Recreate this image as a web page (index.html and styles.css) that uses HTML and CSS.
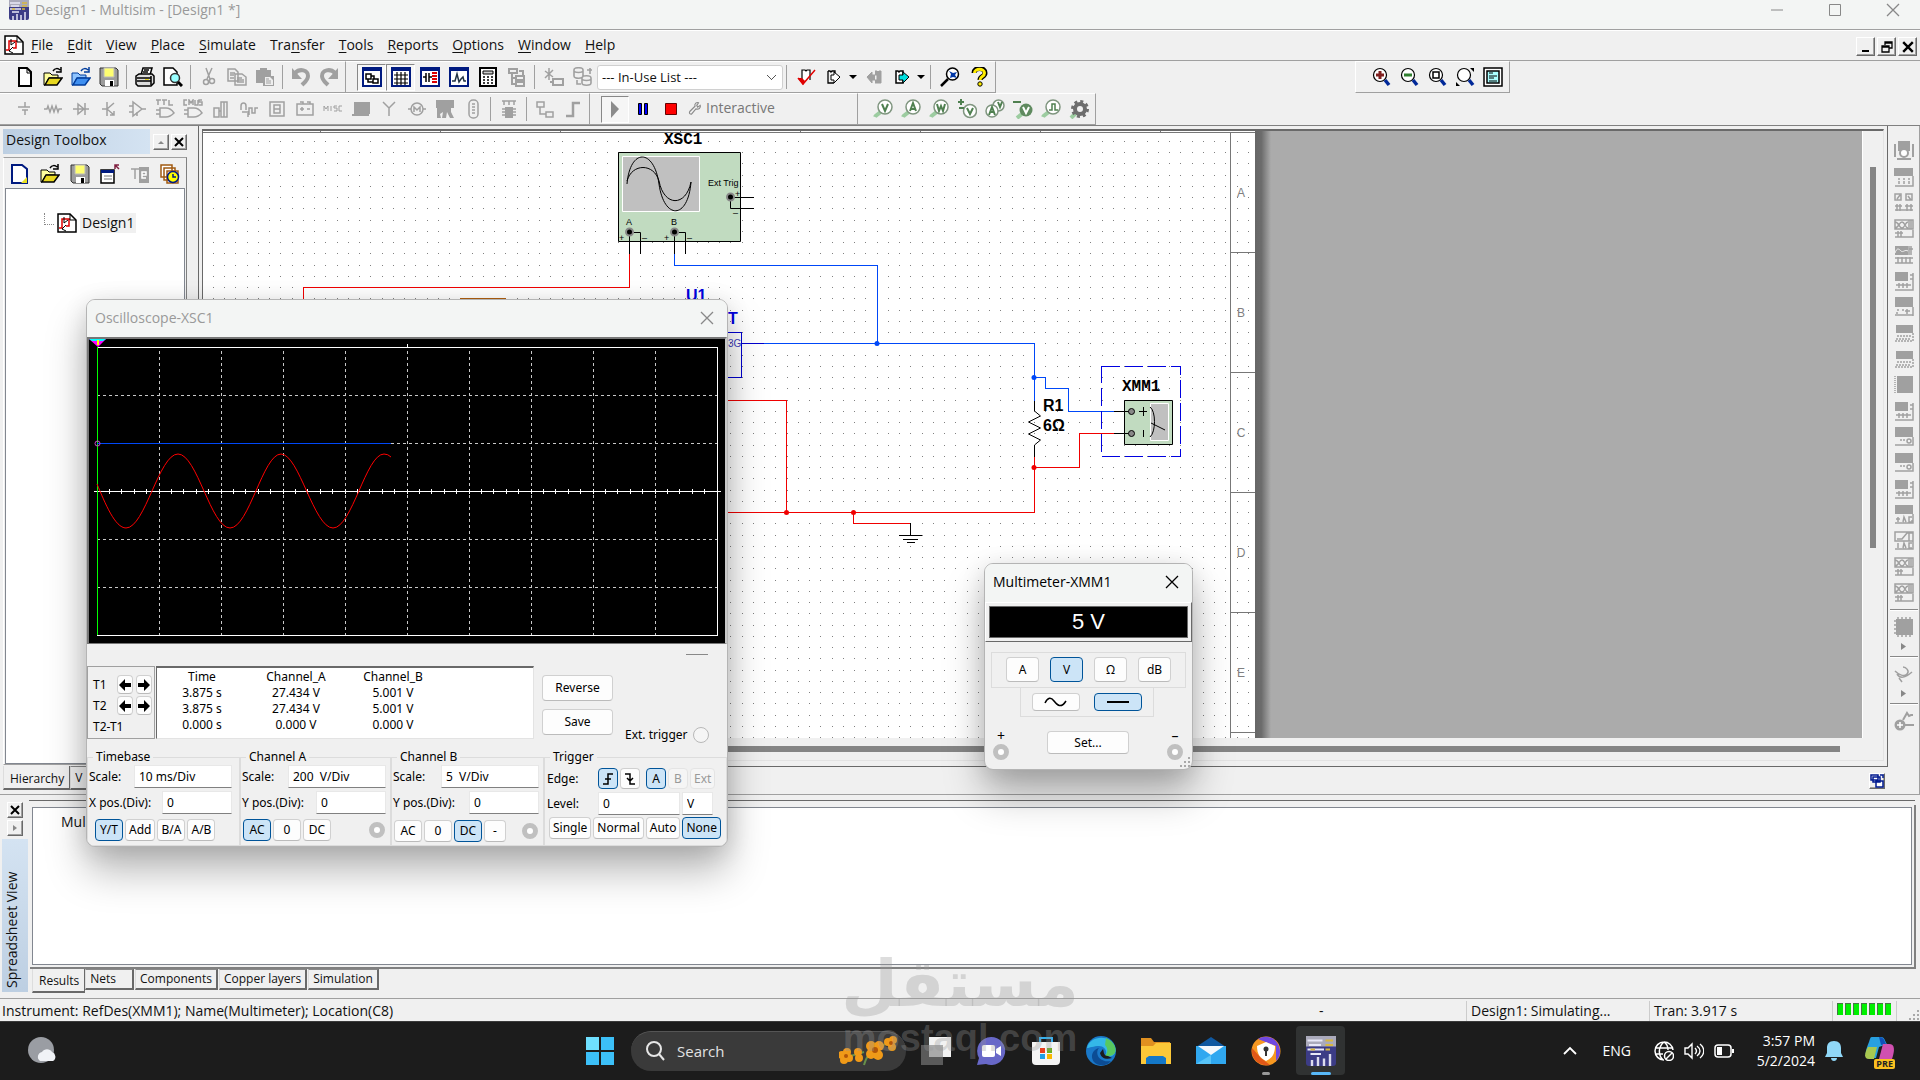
FILE: index.html
```html
<!DOCTYPE html>
<html lang="en">
<head>
<meta charset="utf-8">
<title>Design1 - Multisim</title>
<link rel="stylesheet" href="styles.css">
</head>
<body>
<svg class="defs" aria-hidden="true">
  <symbol id="doc" viewBox="0 0 20 20"><path d="M4 1h8l4 4v14H4z" fill="#fff" stroke="#000" stroke-width="2"/><path d="M12 1v5h4" fill="none" stroke="#000"/></symbol>
  <symbol id="open" viewBox="0 0 20 20"><path d="M1 6h6l2 2h6v3H6l-4 7H1z" fill="#ffff9c" stroke="#000"/><path d="M6 11h13l-5 7H2z" fill="#e8d820" stroke="#000" stroke-width="1.5"/><path d="M10 4c2-3 5-3 7-1m1-3v5h-5" fill="none" stroke="#000" stroke-width="1.5"/></symbol>
  <symbol id="openb" viewBox="0 0 20 20"><path d="M1 6h6l2 2h6v3H6l-4 7H1z" fill="#8fc4ff" stroke="#003c9c"/><path d="M6 11h13l-5 7H2z" fill="#3f8ff0" stroke="#003c9c" stroke-width="1.5"/><path d="M10 4c2-3 5-3 7-1m1-3v5h-5" fill="none" stroke="#003c9c" stroke-width="1.5"/></symbol>
  <symbol id="save" viewBox="0 0 20 20"><path d="M1 1h16l2 2v16H3l-2-2z" fill="#9c9c9c" stroke="#333"/><path d="M5 1h10v9H5z" fill="#ffff70" stroke="#bbb"/><path d="M6 13h9v6H6z" fill="#fff"/><path d="M11 14h3v5h-3z" fill="#000"/></symbol>
  <symbol id="print" viewBox="0 0 20 20"><path d="M6 8l2-7h9l-2 7" fill="#fff" stroke="#000" stroke-width="1.5"/><path d="M1 9l3-2h13l2 2v7l-3 3H3l-2-2z" fill="#ddd" stroke="#000" stroke-width="1.5"/><path d="M2 11h14M2 14h14M16 9v9M9 3h5M8 5h5" stroke="#000" stroke-width="1.5"/><path d="M10 12.500h4" stroke="#e8d820"/></symbol>
  <symbol id="preview" viewBox="0 0 20 20"><path d="M1 1h9l4 4v13H1z" fill="#fff" stroke="#000" stroke-width="1.500"/><circle cx="12" cy="11" r="4.500" fill="#9ff" stroke="#333" stroke-width="1.500"/><path d="M15 15l4 4" stroke="#000" stroke-width="3"/></symbol>
  <symbol id="cut" viewBox="0 0 20 20"><path d="M7 1l4 11M13 1L8 12" stroke="#a0a0a0" stroke-width="1.500"/><circle cx="7" cy="15" r="2.500" fill="none" stroke="#a0a0a0" stroke-width="1.500"/><circle cx="13" cy="14" r="2.500" fill="none" stroke="#a0a0a0" stroke-width="1.500"/></symbol>
  <symbol id="copy" viewBox="0 0 20 20"><path d="M1 2h7l3 3v9H1zM8 7h7l4 3v8H8zM3 6h5M3 8h4M3 11h4M10 11h5M10 13h7M10 15h7" fill="#eee" stroke="#a0a0a0" stroke-width="1.500"/></symbol>
  <symbol id="paste" viewBox="0 0 20 20"><path d="M1 3h4V1h7v2h4v6h3v10H8v-3H1z" fill="#a0a0a0"/><path d="M10 10h5l3 3v5h-8z" fill="#eee"/><path d="M11 12h3M11 14h5M11 16h5" stroke="#a0a0a0"/></symbol>
  <symbol id="undo" viewBox="0 0 20 20"><path d="M4 6c5-5 13-3 13 3 0 4-3 6-6 9" fill="none" stroke="#a0a0a0" stroke-width="4"/><path d="M1 1v11h10z" fill="#a0a0a0"/></symbol>
  <symbol id="redo" viewBox="0 0 20 20"><path d="M16 6C11 1 3 3 3 9c0 4 3 6 6 9" fill="none" stroke="#a0a0a0" stroke-width="4"/><path d="M19 1v11H9z" fill="#a0a0a0"/></symbol>
  <symbol id="frame" viewBox="0 0 20 20"><path d="M1 1h18v18H1z" fill="#fff" stroke="#001a80" stroke-width="2"/><path d="M1 1h18v3H1z" fill="#001a80"/></symbol>
  <symbol id="wtree" viewBox="0 0 20 20"><use href="#frame"/><path d="M4 7h5v5H4zM11 12h5v4h-5zM6 12v3h5M9 9h3v3" fill="none" stroke="#000" stroke-width="1.500"/></symbol>
  <symbol id="wgrid" viewBox="0 0 20 20"><use href="#frame"/><path d="M3 8h14M3 12h14M3 16h14M6 5v13M10 5v13M14 5v13" stroke="#000" stroke-width="1.200"/></symbol>
  <symbol id="wcomp" viewBox="0 0 20 20"><use href="#frame"/><path d="M3 10h3M6 6v9M9 6v9M9 10h3" stroke="#000" stroke-width="1.500"/><path d="M12 6h5M12 9h5M12 12h5M12 15h5" stroke="#d00" stroke-width="2"/></symbol>
  <symbol id="wgraph" viewBox="0 0 20 20"><use href="#frame"/><path d="M3 14h3l2-7 2 8 2-3 2-2 1 4h2" fill="none" stroke="#234" stroke-width="1.500"/></symbol>
  <symbol id="calc" viewBox="0 0 20 20"><path d="M2 1h16v18H2z" fill="#fff" stroke="#000" stroke-width="2"/><path d="M5 4h10v3H5z" fill="#ccc" stroke="#000"/><path d="M5 10h2m2 0h2m2 0h2M5 13h2m2 0h2m2 0h2M5 16h2m2 0h2m2 0h2" stroke="#000" stroke-width="1.500"/></symbol>
  <symbol id="tree" viewBox="0 0 20 20"><path d="M2 2h8v4H2zM9 9h8v4H9zM9 15h8v4H9zM5 6v11h4M5 11h4M12 4h4v5" fill="none" stroke="#a0a0a0" stroke-width="2"/></symbol>
  <symbol id="newc" viewBox="0 0 20 20"><path d="M5 1v12M1 4l8 6M9 3L1 11" stroke="#a0a0a0" stroke-width="1.500"/><path d="M9 12h10v6H9zM6 15h3" fill="none" stroke="#a0a0a0" stroke-width="2"/></symbol>
  <symbol id="db" viewBox="0 0 20 20"><path d="M1 3c0-3 9-3 9 0v6c0 3-9 3-9 0zM9 11c0-3 9-3 9 0v5c0 3-9 3-9 0zM1 4c1 2 8 2 9 0M9 12c1 2 8 2 9 0M17 1v6M14 3h5M4 13v4h4" fill="none" stroke="#a0a0a0" stroke-width="1.600"/></symbol>
  <symbol id="erc" viewBox="0 0 20 20"><path d="M6 13V3h3l1 1 1-1h3v10" fill="#fff" stroke="#000" stroke-width="1.200"/><path d="M2 11l5 6L19 3" fill="none" stroke="#e00000" stroke-width="1.500"/><path d="M2 11h4l3 3-2 4z" fill="#e00000"/></symbol>
  <symbol id="xfer" viewBox="0 0 20 20"><path d="M3 4h2l1 1 1-1h3v3M3 4v12h6" fill="none" stroke="#000" stroke-width="1.300"/><path d="M6 8h3V5l6 5-6 6v-3H6z" fill="#fff" stroke="#000"/></symbol>
  <symbol id="xferg" viewBox="0 0 20 20"><path d="M11 4h2l1 1 1-1h2v12h-6M10 8H8V5l-5 5 5 6v-3h5V8z" fill="#a0a0a0" stroke="#a0a0a0"/></symbol>
  <symbol id="xferc" viewBox="0 0 20 20"><path d="M3 4h2l1 1 1-1h3v12H3z" fill="#fff" stroke="#000" stroke-width="1.500"/><path d="M6 8h4V5l6 5-6 6v-3H6z" fill="#00e0e0" stroke="#000"/></symbol>
  <symbol id="find" viewBox="0 0 20 20"><circle cx="12.500" cy="7" r="6" fill="#fff" stroke="#000" stroke-width="1.500"/><path d="M8 12l-7 7" stroke="#000" stroke-width="2.500"/><path d="M9 4l4 2 4-1-2 3 2 3-4-1-3 1 1-4z" fill="#0038a8"/></symbol>
  <symbol id="help" viewBox="0 0 20 20"><path d="M5 6c0-6 11-6 11 0 0 4-5 3-5 7" fill="none" stroke="#000" stroke-width="5"/><path d="M5.500 6c0-5 10-5 10 0 0 4-4.500 3-4.500 7" fill="none" stroke="#ffec00" stroke-width="3"/><circle cx="11" cy="17" r="2.200" fill="#ffec00" stroke="#000"/></symbol>
  <symbol id="mag" viewBox="0 0 20 20"><circle cx="9" cy="8" r="6.500" fill="#fff" stroke="#000" stroke-width="1.200"/><path d="M14 13l4 5" stroke="#002898" stroke-width="3.500"/></symbol>
  <symbol id="zin" viewBox="0 0 20 20"><use href="#mag"/><path d="M5 8h8M9 4v8" stroke="#802020" stroke-width="3"/></symbol>
  <symbol id="zout" viewBox="0 0 20 20"><use href="#mag"/><path d="M5 8h8" stroke="#308030" stroke-width="3"/></symbol>
  <symbol id="zarea" viewBox="0 0 20 20"><use href="#mag"/><path d="M6 5h6v6H6z" fill="none" stroke="#000" stroke-width="1.500"/></symbol>
  <symbol id="zfit" viewBox="0 0 20 20"><use href="#mag"/><path d="M15 1h4v4zM1 15v4h4z" fill="#000"/></symbol>
  <symbol id="zfull" viewBox="0 0 20 20"><path d="M1 1h18v18H1z" fill="#fff" stroke="#000" stroke-width="1.500"/><path d="M4 4h12v12H4z" fill="#aff" stroke="#000" stroke-width="1.500"/><path d="M6 6h4M6 9h8M6 11h5M6 14h8" stroke="#000"/></symbol>
  <symbol id="c1" viewBox="0 0 20 20"><path d="M5 8h10M7 11h6M10 3v5M10 11v5M3 8h4" class="g"/></symbol>
  <symbol id="c2" viewBox="0 0 20 20"><path d="M1 10h3l1-3 2 6 2-6 2 6 2-6 2 6 1-3h3" class="g"/></symbol>
  <symbol id="c3" viewBox="0 0 20 20"><path d="M2 10h16M7 5v10l6-5zM14 4v12" class="g"/></symbol>
  <symbol id="c4" viewBox="0 0 20 20"><path d="M8 3v14M3 10h5l7-6M8 10l7 6m0-4v4h-4" class="g"/></symbol>
  <symbol id="c5" viewBox="0 0 20 20"><path d="M2 7h4M2 13h4M6 3v14l9-7zM15 10h4M10 13v4" class="g"/></symbol>
  <symbol id="c6" viewBox="0 0 20 20"><path d="M1 1h5M3 1v5M7 1h5M9 1v5M14 1v5h4M5 9h6c4 0 6 2 8 5-2 2-4 4-8 4H5zM1 11h4M1 15h4" class="g"/></symbol>
  <symbol id="c7" viewBox="0 0 20 20"><path d="M4 1H1v5h3M6 6V1l2 3 2-3v5M12 1v5h3V1M19 1h-3v2h3v3h-3M5 9h6c4 0 6 2 8 5-2 2-4 4-8 4H5zM1 11h4M1 15h4" class="g"/></symbol>
  <symbol id="c8" viewBox="0 0 20 20"><path d="M3 9h5v9H3zM10 3h6v15h-6zM13 3v15M8 12h2" class="g"/></symbol>
  <symbol id="c9" viewBox="0 0 20 20"><path d="M2 11V7c0-4 5-4 5 0v4M10 16V9h3v5h3V9h3M9 12v6M3 13h5" class="g"/></symbol>
  <symbol id="c10" viewBox="0 0 20 20"><path d="M3 3h14v14H3zM7 6h6v8H7zM7 10h6" class="g"/></symbol>
  <symbol id="c11" viewBox="0 0 20 20"><path d="M2 5h16v11H2zM5 3h3v2M12 3h3v2M5 10h4M12 10h3M7 8v4" class="g"/></symbol>
  <symbol id="c12" viewBox="0 0 20 20"><path d="M1 12V7l2 3 2-3v5M8 7v5M14 7h-3v2h3v3h-3M19 7h-3v5h3" fill="none" stroke="#a0a0a0"/></symbol>
  <symbol id="c13" viewBox="0 0 20 20"><path d="M4 4h14v10H4zM1 16h17" fill="#a0a0a0" stroke="#a0a0a0" stroke-width="2"/></symbol>
  <symbol id="c14" viewBox="0 0 20 20"><path d="M4 3l6 6 6-6M10 9v8" class="g"/></symbol>
  <symbol id="c15" viewBox="0 0 20 20"><circle cx="10" cy="10" r="6" class="g"/><path d="M1 10h3M16 10h3M7 13V8l3 3 3-3v5" class="g"/></symbol>
  <symbol id="c16" viewBox="0 0 20 20"><path d="M1 1h18v8h-3v4l3 6h-4l-3-6-1 6H7l1-6-3 2 1 4H2V9H1z" fill="#a0a0a0"/></symbol>
  <symbol id="c17" viewBox="0 0 20 20"><rect x="6" y="1" width="9" height="18" rx="4" class="g"/><path d="M9 5h3M9 8h3M9 11h3M9 14h3" class="g"/></symbol>
  <symbol id="c18" viewBox="0 0 20 20"><path d="M3 2h14M5 2v4M10 2v4M15 2v4" class="g"/><path d="M6 8h8v11H6z" fill="#a0a0a0"/><path d="M3 10h3M3 13h3M3 16h3M14 10h3M14 13h3M14 16h3" class="g"/></symbol>
  <symbol id="c19" viewBox="0 0 20 20"><path d="M2 3h7v5H2zM11 13h7v5h-7zM5 8v7h6" class="g"/></symbol>
  <symbol id="c20" viewBox="0 0 20 20"><path d="M3 17h7V4h7" fill="none" stroke="#a0a0a0" stroke-width="2.500"/></symbol>
  <symbol id="probe" viewBox="0 0 20 20"><path d="M2 18c1-3 4-2 6-6" stroke="#9ccca0" stroke-width="4" fill="none"/><circle cx="12" cy="8" r="7" fill="#fff" stroke="#7f957f" stroke-width="1.500"/></symbol>
  <symbol id="pv" viewBox="0 0 20 20"><use href="#probe"/><path d="M9 5l3 7 3-7" class="p"/></symbol>
  <symbol id="pa" viewBox="0 0 20 20"><use href="#probe"/><path d="M9 12l3-8 3 8M10 10h4" class="p"/></symbol>
  <symbol id="pw" viewBox="0 0 20 20"><use href="#probe"/><path d="M8 5l2 7 2-5 2 5 2-7" class="p"/></symbol>
  <symbol id="pvv" viewBox="0 0 20 20"><circle cx="13" cy="12" r="6.500" fill="#fff" stroke="#7f957f" stroke-width="1.500"/><path d="M10 9l3 6 3-6M1 3h6M4 0v6M2 9h5" class="p"/></symbol>
  <symbol id="pav" viewBox="0 0 20 20"><circle cx="13.500" cy="6.500" r="5.500" fill="#fff" stroke="#7f957f" stroke-width="1.500"/><circle cx="7" cy="12" r="6" fill="#fff" stroke="#7f957f" stroke-width="1.500"/><path d="M4 16l3-8 3 8M5 13h4M13 3l2 5 2-5" class="p"/></symbol>
  <symbol id="pr" viewBox="0 0 20 20"><path d="M4 19l6-5" stroke="#9ccca0" stroke-width="4"/><circle cx="13" cy="11" r="6.500" fill="#5f8a5f"/><path d="M10 8l3 6 3-6" fill="none" stroke="#fff" stroke-width="2"/><path d="M0 3h8" class="p"/></symbol>
  <symbol id="pd" viewBox="0 0 20 20"><use href="#probe"/><path d="M8 11h3V5h3v6h3" fill="none" stroke="#4f8050" stroke-width="1.500"/></symbol>
  <symbol id="gear" viewBox="0 0 20 20"><path d="M2 19l5-5" stroke="#9ccca0" stroke-width="4"/><circle cx="11" cy="10" r="5" fill="none" stroke="#6d6d6d" stroke-width="4"/><circle cx="11" cy="10" r="7.500" fill="none" stroke="#6d6d6d" stroke-width="3" stroke-dasharray="3 2.890"/></symbol>
  <symbol id="wrench" viewBox="0 0 16 16"><path d="M2 12l6-6c-1-3 2-5 4-4L10 5l1 2 3-2c1 3-2 5-5 4l-5 6c-2 0-3-1-2-3z" fill="none" stroke="#8a8a8a" stroke-width="1.300"/></symbol>
  <symbol id="schem" viewBox="0 0 20 20"><path d="M1 1h12l6 6v12H1z" fill="#fff" stroke="#000" stroke-width="1.500"/><path d="M2 15h3V6h8M12 6v7H9" fill="none" stroke="#e00000" stroke-width="1.500"/><path d="M13 1v6h6M7 4v6l4-3M9 12l-4 4 4 2" fill="none" stroke="#000"/></symbol>
  <symbol id="newb" viewBox="0 0 20 20"><path d="M2 1h10l5 4v14H2z" fill="#fff" stroke="#001a80" stroke-width="2"/><path d="M11 19l6-6v6z" fill="#e8e020"/></symbol>
  <symbol id="closew" viewBox="0 0 20 20"><path d="M1 6h13v13H1z" fill="#fff" stroke="#000" stroke-width="1.500"/><path d="M1 6h13v3H1z" fill="#001a80"/><path d="M4 12h8M4 15h8" stroke="#777"/><path d="M15 5V1h4M15 1l4 4" fill="none" stroke="#802040" stroke-width="1.500"/></symbol>
  <symbol id="te" viewBox="0 0 20 20"><path d="M1 5h8M5 5v10" class="g"/><path d="M9 3h10v16H9z" fill="#a0a0a0"/><path d="M16 14h-4V8h4v3h-4" fill="none" stroke="#fff" stroke-width="1.500"/></symbol>
  <symbol id="hist" viewBox="0 0 20 20"><path d="M1 1h11v12H1zM4 4h11v12H4zM7 7h11v12H7z" fill="#fff" stroke="#a05a10" stroke-width="1.500"/><circle cx="13" cy="13" r="5.500" fill="#ff0" stroke="#001a80" stroke-width="1.500"/><path d="M13 10v3h3" fill="none" stroke="#001a80" stroke-width="1.500"/></symbol>
  <symbol id="app" viewBox="0 0 20 20"><rect width="20" height="20" rx="2" fill="#3c3c86"/><path d="M0 0h20v7H0z" fill="#aab"/><path d="M1 3h10M2 6h8M1 9h11M3 12h7" stroke="#e8e8f8" stroke-width="1.300"/><path d="M13 3h5M13 6h5M3 9h3M13 9h3" stroke="#d8b840" stroke-width="1.300"/><path d="M4 20v-4M8 20v-6M12 20v-5M16 20v-8" stroke="#dde" stroke-width="1.600"/></symbol>
  <symbol id="n1" viewBox="0 0 20 20"><path d="M5 1h10v8H5zM1 3v13M19 3v13M3 18h14" stroke="#a0a0a0" stroke-width="2" fill="#a0a0a0"/><circle cx="10" cy="12" r="4" fill="#fff" stroke="#a0a0a0" stroke-width="2"/></symbol>
  <symbol id="n2" viewBox="0 0 20 20"><path d="M0 1h19v8H0z" fill="#a0a0a0"/><path d="M19 9v10H1M4 12h2m3 0h2m3 0h2M5 14v3M10 14v3M15 14v3" class="g"/></symbol>
  <symbol id="n3" viewBox="0 0 20 20"><path d="M1 1h6v6H1zM12 1h6v6h-6zM3 6l3-4M14 3l3 4M1 13h7M3 11v7M6 11v7M11 13h8M13 11v7M17 11v7M1 17h18" class="g"/></symbol>
  <symbol id="n4" viewBox="0 0 20 20"><path d="M1 1h18v9H1zM1 3c4 0 4 6 7 6s3-6 6-6M1 9c4 0 4-6 7-6s3 6 6 6M15 1v9M17 1v9M1 14h8M4 12v6M7 12v6M1 18h18v-7" class="g"/></symbol>
  <symbol id="n5" viewBox="0 0 20 20"><path d="M1 1h13v9H1z" fill="#a0a0a0"/><path d="M1 8c2-6 4-4 6-2s4-2 7 0" stroke="#eee" fill="none"/><path d="M15 1v9M17 1v9M15 4h4M1 13h18M1 18h18M4 12v6M8 12v6M12 12v6M16 12v6" class="g"/></symbol>
  <symbol id="n6" viewBox="0 0 20 20"><path d="M1 1h13v9H1z" fill="#a0a0a0"/><path d="M19 2v17H1M16 4h3M16 8h3M2 14h15M5 12v5M9 12v5M13 12v5" class="g"/></symbol>
  <symbol id="n7" viewBox="0 0 20 20"><path d="M1 0h18v10H1z" fill="#a0a0a0"/><path d="M1 18h18M19 10v9M3 13h2m3 0h2M2 16h2M13 12v5M11 14h5" class="g"/></symbol>
  <symbol id="n8" viewBox="0 0 20 20"><path d="M2 2h17v8H2z" fill="#a0a0a0"/><path d="M1 18h18v-9M3 13h15M3 15v3M6 15v3M9 15v3M12 15v3M15 15v3" class="g" stroke-dasharray="2 1"/></symbol>
  <symbol id="n9" viewBox="0 0 20 20"><path d="M3 1h16v17H3z" fill="#a0a0a0"/><path d="M1 1v17" class="g" stroke-dasharray="1 1"/></symbol>
  <symbol id="n10" viewBox="0 0 20 20"><path d="M1 0h18v9H1z" fill="#a0a0a0"/><path d="M1 18h18V9M4 17v-5M2 14h4M9 17l1-5 2 5M18 12h-3v5h3v-2" class="g"/></symbol>
  <symbol id="n11" viewBox="0 0 20 20"><path d="M1 1h18v9H1zM3 8h5l5-6h6M15 1v9M1 18h18v-8M4 12v5M9 17l1-5 2 5M18 12h-3v5h3" class="g"/></symbol>
  <symbol id="n12" viewBox="0 0 20 20"><path d="M1 0h18v10H1z" fill="#a0a0a0"/><path d="M1 18h18v-8M6 13h2M9 13h2" class="g"/><circle cx="15" cy="14" r="2" class="g"/></symbol>
  <symbol id="chip" viewBox="0 0 20 20"><path d="M2 2h17v16H2z" fill="#a0a0a0"/><path d="M3 1h15M3 19h15M1 3v14" class="g" stroke-dasharray="2 2"/></symbol>
  <symbol id="clamp" viewBox="0 0 20 20"><path d="M1 7c4 4 9 6 12 3s-1-7-4-7M3 10c3 5 8 4 15-2M5 14l3 4" class="g"/></symbol>
  <symbol id="cprobe" viewBox="0 0 20 20"><circle cx="6" cy="14" r="5.500" fill="#a0a0a0"/><path d="M3 14h6M6 11v6" stroke="#fff" stroke-width="1.500"/><path d="M9 9l4-7 2 3 2-1h2M11 14h9" fill="none" stroke="#a0a0a0" stroke-width="2"/></symbol>
  <symbol id="x" viewBox="0 0 14 14"><path d="M1 1l12 12M13 1L1 13" fill="none" stroke="currentColor" stroke-width="1.300"/></symbol>
  <symbol id="xb" viewBox="0 0 10 10"><path d="M1 1l8 8M9 1L1 9" stroke="#000" stroke-width="2"/></symbol>
  <symbol id="al" viewBox="0 0 12 12"><path d="M0 6l6-6v4h6v4H6v4z" fill="#000"/></symbol>
  <symbol id="ar" viewBox="0 0 12 12"><path d="M12 6L6 0v4H0v4h6v4z" fill="#000"/></symbol>
  <symbol id="grip" viewBox="0 0 12 12"><path d="M9 1h2v2H9zM5 5h2v2H5zM9 5h2v2H9zM1 9h2v2H1zM5 9h2v2H5zM9 9h2v2H9z" fill="#a8a8a8"/></symbol>
</svg>

<header class="titlebar">
  <svg class="i20"><use href="#app"/></svg>
  <span class="title">Design1 - Multisim - [Design1 *]</span>
  <button class="cap" aria-label="Minimize"><svg class="i14" viewBox="0 0 14 14"><path d="M1 7h12" stroke="#888"/></svg></button>
  <button class="cap" aria-label="Maximize"><svg class="i14" viewBox="0 0 14 14"><path d="M1.500 1.500h11v11h-11z" fill="none" stroke="#888"/></svg></button>
  <button class="cap" aria-label="Close"><svg class="i14"><use href="#x"/></svg></button>
</header>

<nav class="menubar">
  <svg class="i20"><use href="#schem"/></svg>
  <div class="menus">
    <a href="#"><u>F</u>ile</a><a href="#"><u>E</u>dit</a><a href="#"><u>V</u>iew</a><a href="#"><u>P</u>lace</a><a href="#"><u>S</u>imulate</a><a href="#">Tra<u>n</u>sfer</a><a href="#"><u>T</u>ools</a><a href="#"><u>R</u>eports</a><a href="#"><u>O</u>ptions</a><a href="#"><u>W</u>indow</a><a href="#"><u>H</u>elp</a>
  </div>
  <div class="mdi">
    <button class="bevel" aria-label="Minimize design"><svg class="i12" viewBox="0 0 12 12"><path d="M2 9h7v2H2z"/></svg></button>
    <button class="bevel" aria-label="Restore design"><svg class="i12" viewBox="0 0 12 12"><path d="M4 4V1h7v6H8M1 5h7v6H1zM4 2h7M1 6h7" fill="none" stroke="#000" stroke-width="1.300"/></svg></button>
    <button class="bevel" aria-label="Close design"><svg class="i12"><use href="#xb"/></svg></button>
  </div>
</nav>

<div class="toolrow">
  <div class="bar">
    <button class="tb" aria-label="New"><svg class="i20"><use href="#doc"/></svg></button><button class="tb" aria-label="Open"><svg class="i20"><use href="#open"/></svg></button><button class="tb" aria-label="Open sample"><svg class="i20"><use href="#openb"/></svg></button><button class="tb" aria-label="Save"><svg class="i20"><use href="#save"/></svg></button><i class="sep"></i>
    <button class="tb" aria-label="Print"><svg class="i20"><use href="#print"/></svg></button><button class="tb" aria-label="Print preview"><svg class="i20"><use href="#preview"/></svg></button><i class="sep"></i>
    <button class="tb" aria-label="Cut"><svg class="i20"><use href="#cut"/></svg></button><button class="tb" aria-label="Copy"><svg class="i20"><use href="#copy"/></svg></button><button class="tb" aria-label="Paste"><svg class="i20"><use href="#paste"/></svg></button><i class="sep"></i>
    <button class="tb" aria-label="Undo"><svg class="i20"><use href="#undo"/></svg></button><button class="tb" aria-label="Redo"><svg class="i20"><use href="#redo"/></svg></button>
  </div>
  <div class="bar wide">
    <button class="tb on" aria-label="Design Toolbox"><svg class="i20"><use href="#wtree"/></svg></button><button class="tb on" aria-label="Spreadsheet View"><svg class="i20"><use href="#wgrid"/></svg></button><button class="tb" aria-label="SPICE netlist"><svg class="i20"><use href="#wcomp"/></svg></button><button class="tb" aria-label="Grapher"><svg class="i20"><use href="#wgraph"/></svg></button><button class="tb" aria-label="Postprocessor"><svg class="i20"><use href="#calc"/></svg></button><button class="tb" aria-label="Parent sheet"><svg class="i20"><use href="#tree"/></svg></button><i class="sep"></i>
    <button class="tb" aria-label="Component wizard"><svg class="i20"><use href="#newc"/></svg></button><button class="tb" aria-label="Database manager"><svg class="i20"><use href="#db"/></svg></button>
    <select class="inuse" aria-label="In-use list"><option>--- In-Use List ---</option></select><i class="sep"></i>
    <button class="tb" aria-label="Rules check"><svg class="i20"><use href="#erc"/></svg></button><button class="tb" aria-label="Transfer"><svg class="i20"><use href="#xfer"/></svg></button><i class="dd"></i><button class="tb" aria-label="Back annotate"><svg class="i20"><use href="#xferg"/></svg></button><button class="tb" aria-label="Forward annotate"><svg class="i20"><use href="#xferc"/></svg></button><i class="dd"></i><i class="sep"></i>
    <button class="tb" aria-label="Find"><svg class="i20"><use href="#find"/></svg></button><button class="tb" aria-label="Help"><svg class="i20"><use href="#help"/></svg></button>
  </div>
  <div class="bar zoombar">
    <button class="tb" aria-label="Zoom in"><svg class="i20"><use href="#zin"/></svg></button><button class="tb" aria-label="Zoom out"><svg class="i20"><use href="#zout"/></svg></button><button class="tb" aria-label="Zoom area"><svg class="i20"><use href="#zarea"/></svg></button><button class="tb" aria-label="Zoom sheet"><svg class="i20"><use href="#zfit"/></svg></button><button class="tb" aria-label="Full screen"><svg class="i20"><use href="#zfull"/></svg></button>
  </div>
</div>
<div class="toolrow">
  <div class="bar">
    <button class="tb" aria-label="Source"><svg class="i20"><use href="#c1"/></svg></button><button class="tb" aria-label="Basic"><svg class="i20"><use href="#c2"/></svg></button><button class="tb" aria-label="Diode"><svg class="i20"><use href="#c3"/></svg></button><button class="tb" aria-label="Transistor"><svg class="i20"><use href="#c4"/></svg></button><button class="tb" aria-label="Analog"><svg class="i20"><use href="#c5"/></svg></button><button class="tb" aria-label="TTL"><svg class="i20"><use href="#c6"/></svg></button><button class="tb" aria-label="CMOS"><svg class="i20"><use href="#c7"/></svg></button><button class="tb" aria-label="Digital"><svg class="i20"><use href="#c8"/></svg></button><button class="tb" aria-label="Mixed"><svg class="i20"><use href="#c9"/></svg></button><button class="tb" aria-label="Indicator"><svg class="i20"><use href="#c10"/></svg></button><button class="tb" aria-label="Power"><svg class="i20"><use href="#c11"/></svg></button><button class="tb" aria-label="Misc"><svg class="i20"><use href="#c12"/></svg></button><button class="tb" aria-label="Peripherals"><svg class="i20"><use href="#c13"/></svg></button><button class="tb" aria-label="RF"><svg class="i20"><use href="#c14"/></svg></button><button class="tb" aria-label="Electromechanical"><svg class="i20"><use href="#c15"/></svg></button><button class="tb" aria-label="NI"><svg class="i20"><use href="#c16"/></svg></button><button class="tb" aria-label="Connector"><svg class="i20"><use href="#c17"/></svg></button><i class="sep"></i>
    <button class="tb" aria-label="MCU"><svg class="i20"><use href="#c18"/></svg></button><i class="sep"></i>
    <button class="tb" aria-label="Hierarchical block"><svg class="i20"><use href="#c19"/></svg></button><button class="tb" aria-label="Bus"><svg class="i20"><use href="#c20"/></svg></button>
  </div>
  <div class="bar sim">
    <button class="tb on" aria-label="Run"><svg class="i20" viewBox="0 0 20 20"><path d="M6 2l8 8-8 9z" fill="#8c8c8c"/></svg></button><button class="tb" aria-label="Pause"><svg class="i20" viewBox="0 0 20 20"><path d="M5.500 4.500h3v11h-3zM11.500 4.500h3v11h-3z" fill="#0000ff" stroke="#000"/></svg></button><button class="tb" aria-label="Stop"><svg class="i20" viewBox="0 0 20 20"><path d="M4.500 4.500h11v11h-11z" fill="#f00" stroke="#600"/></svg></button>
    <button class="mode"><svg class="i14"><use href="#wrench"/></svg>Interactive</button>
  </div>
  <div class="bar">
    <button class="tb" aria-label="Voltage probe"><svg class="i20"><use href="#pv"/></svg></button><button class="tb" aria-label="Current probe"><svg class="i20"><use href="#pa"/></svg></button><button class="tb" aria-label="Power probe"><svg class="i20"><use href="#pw"/></svg></button><button class="tb" aria-label="Differential probe"><svg class="i20"><use href="#pvv"/></svg></button><button class="tb" aria-label="Voltage and current probe"><svg class="i20"><use href="#pav"/></svg></button><button class="tb" aria-label="Reference probe"><svg class="i20"><use href="#pr"/></svg></button><button class="tb" aria-label="Digital probe"><svg class="i20"><use href="#pd"/></svg></button><button class="tb" aria-label="Probe settings"><svg class="i20"><use href="#gear"/></svg></button>
  </div>
</div>

<main class="main">
  <aside class="toolbox">
    <div class="tbhead"><h2>Design Toolbox</h2><button class="bevel sm" aria-label="Collapse"><svg class="i10" viewBox="0 0 10 10"><path d="M2 7l3-3 3 3z" fill="#888"/></svg></button><button class="bevel sm" aria-label="Close toolbox"><svg class="i10"><use href="#xb"/></svg></button></div>
    <div class="tbbox">
      <div class="tbicons"><svg class="i20"><use href="#newb"/></svg><svg class="i20"><use href="#open"/></svg><svg class="i20"><use href="#save"/></svg><svg class="i20"><use href="#closew"/></svg><svg class="i20"><use href="#te"/></svg><svg class="i20"><use href="#hist"/></svg></div>
      <div class="tree"><i class="branch"></i><svg class="i20"><use href="#schem"/></svg><span>Design1</span></div>
    </div>
    <div class="tabs small"><button class="tab cur">Hierarchy</button><button class="tab">V</button></div>
  </aside>

  <section class="center">
    <div class="mdiframe">
      <div class="workspace">
        <div class="canvas">
          <svg class="sheet" viewBox="203 131 1052 607">
            <defs><pattern id="dots" x="213" y="141" width="45" height="45" patternUnits="userSpaceOnUse"><path d="M0 .5h1m10 0h1m10 0h1m11 0h1M0 11.500h1m10 0h1m10 0h1m11 0h1M0 22.500h1m10 0h1m10 0h1m11 0h1M0 34.500h1m10 0h1m10 0h1m11 0h1" stroke="#808080"/></pattern></defs>
            <rect x="203" y="131" width="1052" height="607" fill="#fff"/>
            <rect x="213" y="141" width="1040" height="597" fill="url(#dots)" shape-rendering="crispEdges"/>
            <path d="M203 132.500h1052M1230.500 132v606M320.500 131v2M440.500 131v2M560.500 131v2M680.500 131v2M800.500 131v2M920.500 131v2M1040.500 131v2M1160.500 131v2M1230 252.500h25M1230 372.500h25M1230 492.500h25M1230 612.500h25M1230 732.500h25" stroke="#777" fill="none"/>
            <g class="zone"><text x="1241" y="197">A</text><text x="1241" y="317">B</text><text x="1241" y="437">C</text><text x="1241" y="557">D</text><text x="1241" y="677">E</text></g>
            <g fill="none" shape-rendering="crispEdges">
              <path d="M629.500 253v34.500H303.500V320M728 400.500h58.500V512M728 512.500h306.500V457M853.500 512v11.500H910M1034 467.500h45.500v-34H1114" stroke="#f00000" />
              <path d="M674.500 253v12.500h203V343M764 343.500h270.500V401M1034 377.500h11.500v11h23v23H1114" stroke="#0048f8"/>
              <path d="M728 332.500h13.500v45H728M741 343.500h23" stroke="#0000d0"/>
              <path d="M460 298.500h46" stroke="#b06010"/>
              <path d="M1101.500 366.500h79v90h-79z" stroke="#0000e0" stroke-dasharray="18 5" />
              <path d="M910.500 523v12M899 535.500h23M903 539.500h15M907 542.500h8" stroke="#000"/>
            </g>
            <path d="M1034.500 401v10l6 5-12 6 12 6-12 6 12 6-6 5v12" fill="none" stroke="#000"/>
            <g fill="#0048f8"><circle cx="877" cy="343.500" r="2.500"/><circle cx="1034" cy="377.500" r="2.500"/></g>
            <g fill="#f00000"><circle cx="786.500" cy="512.500" r="2.500"/><circle cx="853.500" cy="512.500" r="2.500"/><circle cx="1034" cy="467.500" r="2.500"/></g>
            <text class="ref" x="664" y="144">XSC1</text>
            <path d="M618.500 152.500h122v89h-122z" fill="#c1dbc0" stroke="#000"/>
            <path d="M622.500 156.500h77v55h-77z" fill="#c0c0c0" stroke="#fff"/>
            <path d="M627 184c3-36 27-36 32 0s29 36 32-2M627 181c5-18 27-18 32 0 5 26 27 26 32 1" fill="none" stroke="#000"/>
            <path d="M629.500 232v22M634 232.500h6.500V254M674.500 232v22M679 232.500h6.500V254M730 197.500h24M730.500 200v8.500H754" fill="none" stroke="#000"/>
            <g fill="#000" stroke="#888" stroke-width="2"><circle cx="629.500" cy="232" r="3.500"/><circle cx="674.500" cy="232" r="3.500"/><circle cx="730.500" cy="197" r="3.500"/></g>
            <g class="pin"><text x="708" y="186">Ext Trig</text><text x="626" y="225">A</text><text x="671" y="225">B</text><text x="735" y="197">+</text><text x="733" y="216">–</text><text x="619" y="241">+</text><text x="642" y="241">–</text><text x="664" y="241">+</text><text x="687" y="241">–</text></g>
            <g class="blue"><text x="686" y="301">U1</text><text x="728" y="324">T</text></g><text class="reg" x="728" y="347" >3G</text>
            <g class="val"><text x="1043" y="411">R1</text><text x="1043" y="431">6Ω</text></g>
            <text class="ref" x="1122" y="391">XMM1</text>
            <path d="M1124.500 400.500h48v44h-48z" fill="#c1dbc0" stroke="#000"/>
            <path d="M1150.500 403.500h18v37h-18z" fill="#c0c0c0" stroke="#fff"/>
            <path d="M1114 411.500h18M1114 433.500h18M1139 411.500h8M1143.500 407v9M1143.500 430v7M1150 407c6 4 6 25 0 30M1151 423l14 7" fill="none" stroke="#000"/>
            <g fill="#888" stroke="#000"><circle cx="1131.500" cy="411.500" r="3"/><circle cx="1131.500" cy="433.500" r="3"/></g>
          </svg>
          <i class="pageshadow"></i>
        </div>
        <div class="vscroll"><i></i></div>
        <div class="hscroll"><i></i></div>
      </div>
    </div>
    <div class="below"><button class="bevel sm" aria-label="Windows"><svg class="i14" viewBox="0 0 14 14"><path d="M1 1h7v5H1zM3 3h7v5H3zM6 7h7v6H6zM10 1h3v3" fill="#fff" stroke="#001a90" stroke-width="1.500"/></svg></button></div>
  </section>

  <aside class="instruments">
    <svg class="i20"><use href="#n1"/></svg><svg class="i20"><use href="#n2"/></svg><svg class="i20"><use href="#n3"/></svg><svg class="i20"><use href="#n4"/></svg><svg class="i20"><use href="#n5"/></svg><svg class="i20"><use href="#n6"/></svg><svg class="i20"><use href="#n7"/></svg><svg class="i20"><use href="#n8"/></svg><svg class="i20"><use href="#n8"/></svg><svg class="i20"><use href="#n9"/></svg><svg class="i20"><use href="#n6"/></svg><svg class="i20"><use href="#n12"/></svg><svg class="i20"><use href="#n12"/></svg><svg class="i20"><use href="#n6"/></svg><svg class="i20"><use href="#n10"/></svg><svg class="i20"><use href="#n11"/></svg><svg class="i20"><use href="#n4"/></svg><svg class="i20"><use href="#n4"/></svg>
    <i class="hsep"></i><svg class="i20"><use href="#chip"/></svg><i class="tri"></i><i class="hsep"></i><svg class="i20"><use href="#clamp"/></svg><i class="tri"></i><i class="hsep"></i><svg class="i20"><use href="#cprobe"/></svg>
  </aside>
</main>

<section class="spread">
  <div class="strip"><button class="bevel sm" aria-label="Close view"><svg class="i10"><use href="#xb"/></svg></button><button class="bevel sm" aria-label="Expand view"><svg class="i10" viewBox="0 0 10 10"><path d="M3 2l4 3-4 3z" fill="#888"/></svg></button><h2>Spreadsheet View</h2></div>
  <div class="spreadbody">
    <div class="results">Mul</div>
    <div class="tabs"><button class="tab cur">Results</button><button class="tab nets">Nets</button><button class="tab">Components</button><button class="tab">Copper layers</button><button class="tab">Simulation</button></div>
  </div>
</section>

<footer class="status">
  <span class="msg">Instrument: RefDes(XMM1); Name(Multimeter); Location(C8)</span><span class="dash">-</span>
  <span class="cell c1">Design1: Simulating...</span><span class="cell c2">Tran: 3.917 s</span>
  <span class="cell c3"><i></i><i></i><i></i><i></i><i></i><i></i><i></i></span>
  <span class="cell c4"><svg class="i12"><use href="#grip"/></svg></span>
</footer>

<footer class="taskbar">
  <svg class="weather" viewBox="0 0 30 30"><circle cx="13" cy="14" r="13" fill="#9a9da3"/><path d="M12 25a5 5 0 0 1 2-9 6 6 0 0 1 10 0 5 5 0 0 1 1 9z" fill="#f0f2f6"/></svg>
  <div class="apps">
    <button class="task" aria-label="Start"><svg class="i30" viewBox="0 0 30 30"><path d="M1 1h13v13H1zM16 1h13v13H16zM1 16h13v13H1zM16 16h13v13H16z" fill="#3cc0f8"/><path d="M1 1h13v13H1z" fill="#6fe0ff"/></svg></button>
    <label class="search"><svg class="i20" viewBox="0 0 20 20"><circle cx="9" cy="8" r="7" fill="none" stroke="#e6e6e6" stroke-width="2"/><path d="M14 13l5 6" stroke="#e6e6e6" stroke-width="2"/></svg><input type="text" placeholder="Search" aria-label="Search">
      <svg class="flowers" viewBox="0 0 58 30"><path d="M25 29c2-8 8-18 26-22M5 22l20-6" stroke="#68904a" stroke-width="2" fill="none"/><g fill="#f09a18"><circle cx="3" cy="19" r="4"/><circle cx="8" cy="16" r="4"/><circle cx="10" cy="22" r="4"/><circle cx="5" cy="24" r="4"/><circle cx="19" cy="16" r="4"/><circle cx="20" cy="22" r="4"/><circle cx="32" cy="10" r="5"/><circle cx="40" cy="10" r="5"/><circle cx="32" cy="18" r="5"/><circle cx="39" cy="19" r="5"/><circle cx="49" cy="6" r="4"/><circle cx="54" cy="4" r="4"/><circle cx="53" cy="11" r="4"/></g><g fill="#b35608"><circle cx="7" cy="20" r="2"/><circle cx="36" cy="14" r="3"/><circle cx="52" cy="7" r="2"/></g></svg></label>
    <button class="task" aria-label="Task view"><svg class="i30" viewBox="0 0 30 30"><path d="M0 9h22v20H0z" fill="#5a5a5a"/><path d="M8 1h22v20H8z" fill="#f2f2f2"/><path d="M8 9h14v12H8z" fill="#aaa"/></svg></button>
    <button class="task" aria-label="Chat"><svg class="i30" viewBox="0 0 30 30"><path d="M15 1a14 14 0 1 1-5 27l-9 1 2-7A14 14 0 0 1 15 1z" fill="#6868c8"/><rect x="6" y="9" width="13" height="12" rx="2" fill="#fff"/><path d="M20 13l5-3v10l-5-3z" fill="#fff"/></svg></button>
    <button class="task" aria-label="Store"><svg class="i30" viewBox="0 0 30 30"><path d="M9 7V2h12v5" fill="none" stroke="#30b0f0" stroke-width="2"/><path d="M1 6h28v19a4 4 0 0 1-4 4H5a4 4 0 0 1-4-4z" fill="#f4f4f4"/><path d="M9 12h5v5H9z" fill="#e84020"/><path d="M16 12h5v5h-5z" fill="#6ab020"/><path d="M9 18h5v5H9z" fill="#20a0e8"/><path d="M16 18h5v5h-5z" fill="#f8b800"/></svg></button>
    <button class="task" aria-label="Edge"><svg class="i30" viewBox="0 0 30 30"><circle cx="15" cy="15" r="15" fill="#1a78c8"/><path d="M1 12C3 0 24-3 29 11c2 8-4 11-10 9 3-4 0-10-6-10-5 0-10 2-12 2z" fill="#34b8e8"/><path d="M20 2c8 3 12 12 8 16-3 3-8 2-9 2 4-5 2-9 0-11z" fill="#58c860"/><path d="M13 12c-5 6 1 15 12 13-4 5-12 6-17 1-4-5-2-12 5-14z" fill="#0c4c94"/><path d="M14 17c1 5 6 7 12 5l-4-2c-5 0-4-5-5-7z" fill="#1c1c1c"/></svg></button>
    <button class="task" aria-label="File Explorer"><svg class="i30" viewBox="0 0 30 30"><path d="M0 2h10l3 4h16v22H0z" fill="#e09020"/><path d="M0 10h12l3-3h15v21H0z" fill="#fcc838"/><path d="M5 28v-6l3-2h14l3 2v6z" fill="#1478c8"/></svg></button>
    <button class="task" aria-label="Mail"><svg class="i30" viewBox="0 0 30 30"><path d="M0 11L15 1l15 10v17H0z" fill="#1058a0"/><path d="M0 10h30v18H0z" fill="#30a8f0"/><path d="M2 10h26L15 19z" fill="#f4f8fc"/><path d="M0 28l15-9v9z" fill="#58c4f8"/></svg></button>
    <button class="task run" aria-label="Secure Browser"><svg class="i30" viewBox="0 0 30 30"><circle cx="15" cy="15" r="14.500" fill="#f89820"/><path d="M7 3c9-6 22 0 22 13 0 4-2 7-4 9V10z" fill="#7048e0"/><path d="M1 12C-1 24 10 31 19 29l-9-7z" fill="#e05818"/><path d="M15 6l9 4c0 8-3 12-9 15-6-3-9-7-9-15z" fill="#fff"/><circle cx="15" cy="13" r="2.500" fill="#333"/><path d="M14 14h2v6h-2z" fill="#333"/></svg></button>
    <button class="task active" aria-label="Multisim"><svg class="i30"><use href="#app"/></svg></button>
  </div>
  <div class="tray">
    <svg class="i14" viewBox="0 0 14 14"><path d="M1 10l6-6 6 6" fill="none" stroke="#fff" stroke-width="1.800"/></svg>
    <span class="lang">ENG</span>
    <svg class="i20" viewBox="0 0 20 20"><path d="M10 1a9 9 0 1 0 0 18M10 1a9 9 0 0 1 9 8M1 7h17M1 13h8M10 1c-6 5-6 13-1 18M10 1c3 2 4 5 4 8" fill="none" stroke="#fff" stroke-width="1.500"/><circle cx="15" cy="15" r="4.500" fill="none" stroke="#fff" stroke-width="1.500"/><path d="M12 18l6-6" stroke="#fff" stroke-width="1.500"/></svg>
    <svg class="i20" viewBox="0 0 20 20"><path d="M1 7h3l4-4v14l-4-4H1zM11 7c2 2 2 4 0 6M13 5c4 3 4 7 0 10M16 3c5 4 5 10 0 14" fill="none" stroke="#fff" stroke-width="1.400"/></svg>
    <svg class="i20" viewBox="0 0 20 20"><rect x="1" y="4" width="16" height="12" rx="3" fill="none" stroke="#fff" stroke-width="1.500"/><rect x="3" y="6" width="5" height="8" fill="#fff"/><path d="M19 8v4" stroke="#fff" stroke-width="2"/></svg>
    <div class="clock"><span>3:57 PM</span><span>5/2/2024</span></div>
    <svg class="i18" viewBox="0 0 18 20"><path d="M9 0c5 0 7 3 7 7v5l2 4H0l2-4V7c0-4 2-7 7-7zM6 17h6c0 4-6 4-6 0z" fill="#90d8f8"/></svg>
    <div class="copilot"><svg class="i30" viewBox="0 0 30 30"><path d="M7 1h9c4 0 4 5 6 7l-8 3-3 11H5c-7 0-4-9-1-16 1-3 1-5 3-5z" fill="#28a0e0"/><path d="M3 11h9l-3 12H4c-6 0-4-7-1-12z" fill="#a8c850"/><path d="M14 1c5 0 5 3 7 7l-5 1z" fill="#1050b8"/><path d="M18 8h6c6 0 6 6 3 15h-13z" fill="#d050b0"/></svg><b>PRE</b></div>
  </div>
</footer>

<section class="window osc">
  <header class="wtitle"><h2>Oscilloscope-XSC1</h2><button class="cap" aria-label="Close oscilloscope"><svg class="i14"><use href="#x"/></svg></button></header>
  <div class="scope">
    <svg viewBox="89 339 636 304" preserveAspectRatio="none">
      <rect x="89" y="339" width="636" height="304"/>
      <g fill="none" shape-rendering="crispEdges">
        <path d="M159.500 351v284M221.500 351v284M283.500 351v284M345.500 351v284M407.500 351v284M469.500 351v284M531.500 351v284M593.500 351v284M655.500 351v284M97 395.500h620M97 443.500h620M97 539.500h620M97 587.500h620" stroke="#c8c8c8" stroke-dasharray="3 3"/>
        <path d="M97 347.500h620.500v288H97M407.500 344v4M94 491.500h627" stroke="#fff"/>
        <path d="M109 491.500h609" stroke="#fff" stroke-width="5" stroke-dasharray="1 11.400"/>
        <path d="M97.500 347v288" stroke="#0f0"/><path d="M97 443.500h294" stroke="#0048f8"/>
      </g>
      <path d="M97 484C105 503 115 528 126 528c19 0 33-74 52-74s33 74 52 74 33-74 51-74 33 74 52 74 33-74 51-74q4 0 7 3" fill="none" stroke="#f00"/>
      <circle cx="97.500" cy="443.500" r="2.500" fill="none" stroke="#d040d0"/>
      <path d="M89 339h17l-8 8z" fill="#f0f"/><path d="M89 339h17l-3 2H92z" fill="#0ff"/><path d="M97 340h2v5h-2z" fill="#ff0"/>
    </svg>
  </div>
  <div class="splitter"><i></i></div>
  <div class="readout">
    <div class="cursors"><span>T1</span><button class="wb arrow" aria-label="T1 left"><svg class="i12"><use href="#al"/></svg></button><button class="wb arrow" aria-label="T1 right"><svg class="i12"><use href="#ar"/></svg></button><span>T2</span><button class="wb arrow" aria-label="T2 left"><svg class="i12"><use href="#al"/></svg></button><button class="wb arrow" aria-label="T2 right"><svg class="i12"><use href="#ar"/></svg></button><span class="diff">T2-T1</span></div>
    <div class="list"><table><tr><th>Time</th><th>Channel_A</th><th>Channel_B</th></tr><tr><td>3.875 s</td><td>27.434 V</td><td>5.001 V</td></tr><tr><td>3.875 s</td><td>27.434 V</td><td>5.001 V</td></tr><tr><td>0.000 s</td><td>0.000 V</td><td>0.000 V</td></tr></table></div>
    <div class="acts"><button class="wb big">Reverse</button><button class="wb big">Save</button></div>
    <label class="ext">Ext. trigger <input type="radio"></label>
  </div>
  <div class="groups">
    <fieldset class="time"><legend>Timebase</legend>
      <div class="row"><label for="ts">Scale:</label><input id="ts" class="w98" value="10 ms/Div"></div>
      <div class="row"><label for="tp">X pos.(Div):</label><input id="tp" class="w70" value="0"></div>
      <div class="btns in"><button class="wb sel">Y/T</button><button class="wb">Add</button><button class="wb">B/A</button><button class="wb">A/B</button></div>
    </fieldset>
    <fieldset><legend>Channel A</legend>
      <div class="row"><label for="as">Scale:</label><input id="as" class="w98" value="200  V/Div"></div>
      <div class="row"><label for="ap">Y pos.(Div):</label><input id="ap" class="w70" value="0"></div>
      <div class="btns"><button class="wb sel">AC</button><button class="wb">0</button><button class="wb">DC</button><i class="jack"></i></div>
    </fieldset>
    <fieldset class="chb"><legend>Channel B</legend>
      <div class="row"><label for="bs">Scale:</label><input id="bs" class="w98" value="5  V/Div"></div>
      <div class="row"><label for="bp">Y pos.(Div):</label><input id="bp" class="w70" value="0"></div>
      <div class="btns"><button class="wb">AC</button><button class="wb">0</button><button class="wb sel">DC</button><button class="wb">-</button><i class="jack"></i></div>
    </fieldset>
    <fieldset class="trig"><legend>Trigger</legend>
      <div class="row"><span class="lbl">Edge:</span><button class="wb sq sel" aria-label="Rising edge"><svg class="i12" viewBox="0 0 12 12"><path d="M1 11h5V1h5M3 6h6" fill="none" stroke="#000" stroke-width="1.500"/></svg></button><button class="wb sq" aria-label="Falling edge"><svg class="i12" viewBox="0 0 12 12"><path d="M1 1h5v10h5M3 5l3 3 3-3" fill="none" stroke="#000" stroke-width="1.500"/></svg></button><button class="wb sq sel gapl">A</button><button class="wb sq" disabled>B</button><button class="wb sq" disabled>Ext</button></div>
      <div class="row"><label class="lbl" for="lv">Level:</label><input id="lv" class="w82" value="0"><input class="w30" value="V" aria-label="Level unit"></div>
      <div class="btns"><button class="wb">Single</button><button class="wb">Normal</button><button class="wb">Auto</button><button class="wb sel">None</button></div>
    </fieldset>
  </div>
</section>

<section class="window meter">
  <header class="wtitle"><h2>Multimeter-XMM1</h2><button class="cap" aria-label="Close multimeter"><svg class="i14"><use href="#x"/></svg></button></header>
  <div class="display"><output>5 V</output></div>
  <div class="modes"><button class="wb">A</button><button class="wb sel">V</button><button class="wb">Ω</button><button class="wb">dB</button></div>
  <div class="acdc"><button class="wb" aria-label="AC"><svg viewBox="0 0 24 10"><path d="M1 6c3-6 6-6 9-2s7 8 12 0" fill="none" stroke="#000" stroke-width="1.500"/></svg></button><button class="wb sel" aria-label="DC"><svg viewBox="0 0 24 10"><path d="M1 5h22" stroke="#000" stroke-width="2"/></svg></button></div>
  <div class="terms"><span class="term">+<i class="jack"></i></span><button class="wb">Set...</button><span class="term">–<i class="jack"></i></span></div>
  <svg class="i12 corner"><use href="#grip"/></svg>
</section>

<div class="mark"><span lang="ar" dir="rtl">مستقل</span><span>mostaql.com</span></div>
</body>
</html>
```
FILE: styles.css
```css
* { box-sizing: border-box; }
body {
  margin: 0; min-height: 100vh; display: flex; flex-direction: column; position: relative; overflow: hidden;
  background: #f0f0f0; color: #111; font: 14px/20px "Open Sans", "Noto Sans", sans-serif;
}
button, input, select { font: inherit; color: inherit; margin: 0; padding: 0; }
button { background: none; border: 0; display: flex; align-items: center; justify-content: center; white-space: nowrap; }
h2 { margin: 0; font: inherit; white-space: nowrap; }
a { color: inherit; text-decoration: none; }
svg { display: block; flex: none; }
i { display: block; flex: none; }
.defs { position: absolute; width: 0; height: 0; }
.g { fill: none; stroke: #a0a0a0; stroke-width: 1.5px; }
.p { fill: none; stroke: #4f8050; stroke-width: 2px; }
.i10 { width: 10px; height: 10px; }
.i12 { width: 12px; height: 12px; }
.i14 { width: 14px; height: 14px; }
.i18 { width: 18px; height: 20px; }
.i20 { width: 20px; height: 20px; }
.i30 { width: 30px; height: 30px; }

/* Application title and menus */
.titlebar { display: flex; height: 30px; padding: 0 1px 9px 9px; gap: 6px; background: #f3f5f4; border-bottom: 1px solid #a0a0a0; color: #999; align-items: center; }
.titlebar .title { flex: 1; }
.titlebar .cap { width: 52px; height: 20px; }
.cap { color: #888; }
.menubar { display: flex; align-items: center; height: 31px; padding: 0 3px 2px 4px; border-bottom: 1px solid #a0a0a0; border-top: 1px solid #fff; gap: 7px; }
.menus { display: flex; gap: 14px; flex: 1; }
.menus u { text-underline-offset: 2px; }
.mdi { display: flex; gap: 2px; padding-top: 4px; }
.bevel { width: 19px; height: 19px; background: #f0f0f0; border: 1px solid; border-color: #fff #696969 #696969 #fff; box-shadow: inset -1px -1px #a0a0a0; }
.bevel.sm { width: 16px; height: 16px; }

/* Toolbars */
.toolrow { display: flex; height: 32px; }
.bar { display: flex; align-items: center; padding: 0 2px 0 11px; border: 1px solid #a0a0a0; border-color: #fff #a0a0a0 #a0a0a0 #fff; border-left: 0; }
.tb { width: 28px; height: 27px; flex: none; }
.wide .tb { width: 29px; }
.tb.on { border: 1px solid; border-color: #888 #fff #fff #888; background: #f6f6f6; }
.sep { width: 8px; height: 24px; background: linear-gradient(#a0a0a0, #a0a0a0) 3px 0 / 1px 100% no-repeat; }
.dd { width: 10px; height: 4px; background: #000; clip-path: polygon(0 0, 8px 0, 4px 4px); }
.inuse { width: 186px; height: 25px; padding: 0 12px 0 4px; border: 1px solid #d0d0d0; border-radius: 3px; font-size: 13px; appearance: none; background-color: #fff; background-image: linear-gradient(45deg, transparent 46%, #555 46%, #555 56%, transparent 56%), linear-gradient(-45deg, transparent 46%, #555 46%, #555 56%, transparent 56%); background-size: 5px 5px; background-position: right 10px center, right 6px center; background-repeat: no-repeat; }
.zoombar { margin-left: 359px; border-left: 1px solid #fff; }
.bar.sim { width: 268px; }
.mode { color: #777; gap: 4px; padding: 0 0 3px 3px; }

/* Design toolbox */
.main { display: flex; flex: 1; min-height: 0; border-top: 1px solid #808080; }
.toolbox { width: 198px; flex: none; display: flex; flex-direction: column; padding: 3px 11px 2px 3px; }
.tbhead { display: flex; gap: 2px; align-items: center; }
.tbhead h2 { width: 147px; height: 25px; padding: 1px 3px; margin-right: 1px; background: linear-gradient(90deg, #bdcfe2, #d4e3f2); }
.tbbox { flex: 1; display: flex; flex-direction: column; margin-top: 3px; border: 1px solid; border-color: #a0a0a0 #808080 #a0a0a0 #fff; padding: 0 1px; }
.tbicons { display: flex; gap: 10px; height: 30px; padding: 6px 5px 0; }
.tree { flex: 1; display: flex; align-items: flex-start; padding: 24px 0 0 38px; background: #fff; border: 1px solid #828790; gap: 3px; }
.tree .branch { width: 10px; height: 12px; border: 1px dotted #888; border-width: 0 0 1px 1px; }
.tree span { background: #f0f0f0; padding: 0 2px; }
.tabs { display: flex; font-size: 12px; }
.tab { height: 21px; padding: 0 4px; margin-right: 1px; background: #f0f0f0; border: 1px solid #696969; border-width: 1px 2px 2px 1px; border-color: #888 #696969 #696969 #ddd; }
.tab.cur { height: 24px; padding: 2px 5px 0 6px; border-width: 0 1px 2px 1px; margin-right: 0; }
.tabs.small { height: 27px; padding-top: 1px; }
.tabs.small .cur { height: 25px; padding-top: 4px; }
.tabs.small .tab { height: 24px; }
.nets { padding-right: 16px; }

/* Circuit workspace */
.center { flex: 1; min-width: 0; display: flex; flex-direction: column; }
.mdiframe { flex: 1; min-height: 0; border: 1px solid #696969; border-top: 0; padding: 3px 3px 5px; display: flex; }
.workspace { flex: 1; min-width: 0; display: grid; grid-template-columns: minmax(0, 1fr) 21px; grid-template-rows: minmax(0, 1fr) 22px; border: 1px solid #e3e3e3; border-top: 2px solid #696969; border-left: 1px solid #696969; }
.canvas { background: #ababab; overflow: hidden; display: flex; align-items: flex-start; }
.sheet { width: 1052px; height: 607px; }
.pageshadow { width: 16px; align-self: stretch; background: linear-gradient(90deg, #666, #6c6c6c 40%, #ababab); }
.vscroll { padding: 36px 7px 190px; border-left: 1px solid #fff; }
.vscroll i { width: 6px; height: 100%; background: #858585; }
.hscroll { padding: 8px 22px 0 20px; grid-column: 1; }
.hscroll i { height: 6px; background: #858585; }
.below { height: 27px; display: flex; justify-content: flex-end; align-items: flex-start; padding: 6px 3px; }
.instruments { width: 32px; flex: none; display: flex; flex-direction: column; align-items: center; gap: 6px; padding-top: 15px; border-right: 1px solid #a0a0a0; }
.hsep { width: 28px; height: 2px; border-top: 1px solid #888; background: #fff; }
.tri { width: 5px; height: 7px; background: #888; clip-path: polygon(0 0, 100% 50%, 0 100%); }
.instruments .hsep { margin: 0; }

/* Spreadsheet view */
.spread { display: flex; height: 204px; border-top: 1px solid #a0a0a0; padding: 5px 5px 0 2px; }
.strip { width: 27px; padding-right: 1px; display: flex; flex-direction: column; align-items: center; gap: 2px; padding-top: 2px; }
.strip h2 { width: 26px; height: 153px; padding: 4px 0; line-height: 20px; writing-mode: vertical-rl; transform: rotate(180deg); background: linear-gradient(#bdcfe2, #d4e3f2); margin-top: 1px; }
.spreadbody { flex: 1; min-width: 0; border-top: 1px solid #696969; padding: 0 0 0 3px; }
.results { height: 158px; padding: 4px 28px 0; background: #fff; border: 1px solid #828790; box-shadow: 0 0 0 2px #f0f0f0, 1px 1px 0 3px #808080; margin-top: 6px; margin-right: 3px; }
.spread .tabs { padding-top: 4px; }

/* Status bar */
.status { display: flex; height: 23px; border-top: 1px solid #a0a0a0; padding: 2px 0 0 2px; align-items: center; white-space: nowrap; }
.msg { flex: 1; }
.dash { width: 147px; }
.cell { border-left: 1px solid #ccc; height: 20px; padding-left: 4px; }
.c1 { width: 183px; }
.c2 { width: 183px; }
.c3 { width: 64px; display: flex; gap: 2px; padding-top: 2px; }
.c3 i { width: 6px; height: 12px; background: #00f000; border-left: 1px solid #447744; border-top: 1px solid #447744; }
.c4 { width: 24px; padding: 8px 0 0 11px; }

/* Taskbar */
.taskbar { display: flex; height: 60px; align-items: center; padding-bottom: 2px; background: #1c1c1c; border-top: 1px solid #3a3a3a; color: #fff; }
.weather { width: 30px; height: 30px; margin-left: 28px; }
.apps { display: flex; align-items: center; margin-left: 517px; }
.task { width: 49px; height: 49px; margin-right: 6px; border-radius: 4px; flex: none; position: relative; }
.task.active { background: #303232; }
.task.active::after, .task.run::after { content: ""; position: absolute; bottom: 0; left: 50%; width: 8px; height: 3px; margin-left: -4px; border-radius: 2px; background: #999; }
.task.active::after { width: 20px; margin-left: -10px; background: #58b8f8; }
.search { width: 275px; height: 40px; display: flex; align-items: center; gap: 12px; padding: 0 10px 0 14px; border-radius: 20px; background: #3a3a3a; border-top: 1px solid #555; margin-right: 5px; margin-left: 2px; }
.search input { width: 150px; border: 0; background: none; font-size: 15px; outline: 0; }
.search input::placeholder { color: #e2e2e2; opacity: 1; }
.flowers { width: 58px; height: 30px; }
.task:first-child { margin-right: 5px; }
.tray { display: flex; align-items: center; gap: 10px; margin-left: auto; padding-right: 25px; }
.lang { margin: 0 13px 0 16px; }
.clock { display: flex; flex-direction: column; align-items: flex-end; width: 71px; }
.copilot { display: flex; position: relative; margin-left: 12px; }
.copilot b { position: absolute; right: 0; bottom: -3px; background: #fcc020; color: #222; font-size: 9px; line-height: 10px; padding: 0 2px; border-radius: 2px; }

/* Instrument windows floating over the workspace */
.window { position: absolute; background: #f0f0f0; border: 1px solid #b4b4b4; border-radius: 9px; box-shadow: 0 24px 40px rgba(0, 0, 0, .28), 0 4px 24px rgba(0, 0, 0, .12); font: 12px/16px "Noto Sans", sans-serif; color: #000; overflow: hidden; }
.wtitle { display: flex; justify-content: space-between; align-items: center; background: #f3f5f4; height: 37px; padding: 0 13px 2px 8px; font: 14px/20px "Open Sans", sans-serif; }
.osc { left: 86px; top: 299px; width: 642px; }
.osc .wtitle { color: #999; }
.scope { border: 2px solid #777; border-right-color: #c8c8c8; border-bottom: 1px solid #777; }
.scope svg { width: 100%; height: 304px; }
.splitter { height: 22px; padding: 10px 19px 0 0; }
.splitter i { width: 22px; height: 1px; background: #888; margin-left: auto; }
.readout { display: flex; height: 73px; }
.cursors { width: 68px; border: 1px solid #a0a0a0; padding: 8px 2px 0 5px; display: grid; grid-template-columns: 21px 16px 16px; column-gap: 3px; row-gap: 2px; align-items: center; align-content: start; }
.cursors .diff { grid-column: 1 / 4; margin-top: 2px; }
.wb { background: #fdfdfd; border: 1px solid #d0d0d0; border-bottom-color: #bbb; border-radius: 4px; }
.wb.sel { background: #cce4f7; border-color: #005499; }
.wb:disabled { background: #f5f5f5; border-color: #e4e4e4; color: #999; }
.arrow { height: 19px; }
.list { width: 378px; margin-left: 1px; padding: 1px 0 0 2px; background: #fff; border: 1px solid; border-color: #696969 #e3e3e3 #e3e3e3 #696969; border-top-width: 2px; }
.list table { border-collapse: collapse; width: 280px; table-layout: fixed; }
.list th, .list td { padding: 0; height: 16px; line-height: 16px; font-weight: normal; text-align: center; }
.list th:first-child { width: 86px; }
.list th:nth-child(2) { width: 102px; }
.acts { display: flex; flex-direction: column; gap: 8px; padding: 9px 0 0 8px; }
.big { width: 71px; height: 26px; }
.ext { display: flex; align-items: flex-end; gap: 5px; margin-left: 12px; white-space: nowrap; height: 77px; }
.ext input { appearance: none; width: 16px; height: 16px; border: 1px solid #b8b8b8; border-radius: 50%; background: #f5f5f5; }
.groups { display: grid; grid-template-columns: 153px 151px 153px 1fr; padding-top: 10px; }
fieldset { margin: 0; padding: 0 4px 3px 1px; border: 1px solid #dcdcdc; min-width: 0; height: 97px; }
fieldset.time { padding-right: 7px; }
legend { margin-left: 4px; padding: 0 3px; }
.row { display: flex; align-items: center; justify-content: space-between; height: 23px; margin-bottom: 3px; white-space: pre; }
.row input { height: 23px; padding: 0 4px; border: 1px solid #e8e8e8; border-bottom-color: #808080; background: #fff; min-width: 0; }
.w98 { width: 98px; }
.w70 { width: 70px; }
.w82 { width: 82px; }
.w30 { width: 31px; }
.btns { display: flex; gap: 2px; padding: 2px 1px 0; align-items: center; }
.btns.in { padding-left: 6px; }
.btns .wb { height: 22px; min-width: 28px; padding: 0 3px; }
.chb .btns { padding-top: 3px; }
.chb .btns .wb:nth-child(4) { min-width: 22px; }
.jack { width: 16px; height: 16px; border: 5px solid #c0c0c0; border-radius: 50%; background: #fff; }
.btns .jack { margin-left: auto; }
.trig .row { justify-content: flex-start; gap: 2px; margin: 2px 0; }
.trig .btns { padding: 0 0 0 3px; }
.trig .lbl { width: 50px; padding-left: 1px; }
.sq { min-width: 20px; height: 21px; padding: 0 3px; }
.gapl { margin-left: 4px; }

.meter { left: 984px; top: 563px; width: 209px; }
.meter .cap { color: #000; }
.meter .wtitle { height: 38px; }
.display { border: 1px solid; border-color: #fff #696969 #696969 #fff; padding: 3px; background: #f0f0f0; }
.display output { display: block; background: #000; color: #fff; border: 1px solid #696969; text-align: center; font: 22px/30px "Liberation Sans", Arial, sans-serif; height: 32px; }
.modes { display: flex; justify-content: center; gap: 11px; margin: 10px 6px 0; padding: 4px 0; border: 1px solid #dcdcdc; height: 36px; }
.modes .wb { width: 33px; height: 25px; }
.acdc { display: flex; justify-content: center; gap: 14px; align-items: center; margin: 0 38px 0 35px; border: 1px solid #dcdcdc; border-top: 0; height: 29px; padding-bottom: 1px; }
.acdc .wb { width: 48px; height: 18px; }
.acdc svg { width: 24px; height: 10px; }
.terms { display: flex; justify-content: space-between; padding: 11px 9px 9px 8px; }
.terms .wb { width: 82px; height: 23px; margin-top: 3px; }
.term { display: flex; flex-direction: column; align-items: center; font-size: 14px; }
.corner { position: absolute; right: 1px; bottom: 1px; }

/* Schematic lettering */
.zone { font: 12px "Liberation Sans", Arial, sans-serif; fill: #808080; text-anchor: middle; }
.ref { font: bold 16px "Liberation Mono", "Courier New", monospace; }
.pin { font: 9px "Liberation Sans", Arial, sans-serif; }
.blue { font: bold 16px "Liberation Sans", Arial, sans-serif; fill: #0000e0; }
.reg { font: 10px "Liberation Sans", Arial, sans-serif; fill: #4040c0; }
.val { font: bold 16px "Liberation Sans", Arial, sans-serif; }

/* Site mark over the whole screen */
.mark { position: absolute; left: 845px; top: 946px; width: 230px; display: flex; flex-direction: column; align-items: center; color: rgba(150, 150, 150, .32); white-space: nowrap; pointer-events: none; }
.mark span:first-child { font: bold 65px/76px "DejaVu Sans", sans-serif; }
.mark span:last-child { font: bold 38px/32px "Liberation Sans", Arial, sans-serif; }
```
